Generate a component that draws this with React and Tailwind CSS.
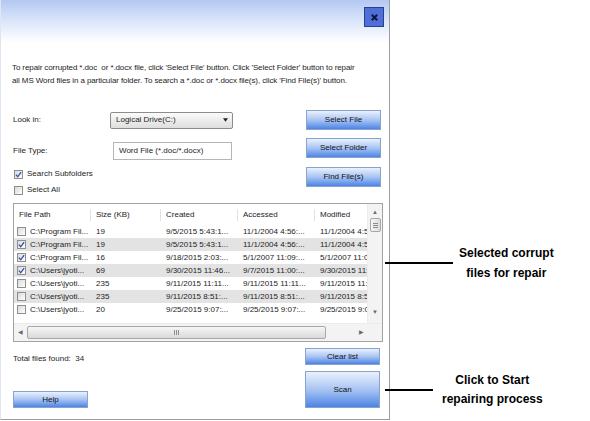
import React from 'react';

const rows = [
  { checked: false, path: 'C:\\Program Fil...', size: '19', created: '9/5/2015 5:43:1...', accessed: '11/1/2004 4:56:...', modified: '11/1/2004 4:56:...' },
  { checked: true, path: 'C:\\Program Fil...', size: '19', created: '9/5/2015 5:43:1...', accessed: '11/1/2004 4:56:...', modified: '11/1/2004 4:56:...' },
  { checked: true, path: 'C:\\Program Fil...', size: '16', created: '9/18/2015 2:03:...', accessed: '5/1/2007 11:09:...', modified: '5/1/2007 11:09:...' },
  { checked: true, path: 'C:\\Users\\jyoti...', size: '69', created: '9/30/2015 11:46...', accessed: '9/7/2015 11:00:...', modified: '9/30/2015 11:46...' },
  { checked: false, path: 'C:\\Users\\jyoti...', size: '235', created: '9/11/2015 11:11...', accessed: '9/11/2015 11:11...', modified: '9/11/2015 11:11...' },
  { checked: false, path: 'C:\\Users\\jyoti...', size: '235', created: '9/11/2015 8:51:...', accessed: '9/11/2015 8:51:...', modified: '9/11/2015 8:51:...' },
  { checked: false, path: 'C:\\Users\\jyoti...', size: '20', created: '9/25/2015 9:07:...', accessed: '9/25/2015 9:07:...', modified: '9/25/2015 9:07:...' },
];

const CheckBox = ({ checked }) => (
  <span className="flex items-center justify-center w-[9px] h-[9px] shrink-0 border border-[#8e8f8f] bg-gradient-to-br from-[#d9d9d9] to-white">
    {checked && (
      <svg viewBox="0 0 8 8" className="w-[7px] h-[7px]">
        <path d="M1 4.2 L3.1 6.6 L7 1.2" fill="none" stroke="#3551a5" strokeWidth="1.5" />
      </svg>
    )}
  </span>
);

const BlueButton = ({ children, className }) => (
  <button className={`flex items-center justify-center border border-[#8aa3cc] bg-gradient-to-b from-[#eaf1fd] via-[#a9c4f3] to-[#4c84e4] text-[#111] ${className}`}>
    {children}
  </button>
);

const Cell = ({ className, children }) => (
  <div className={`shrink-0 overflow-hidden whitespace-nowrap pl-[5px] ${className}`}>{children}</div>
);

const FileTable = () => (
  <div className="ml-[12px] mt-[6px] w-[370px] h-[139px] border border-[#a3a3a3] flex flex-col bg-white">
    <div className="flex h-[119px]">
      <div className="flex-1 flex flex-col overflow-hidden">
        <div className="flex h-[21px] items-center">
          <Cell className="w-[77px] pl-[4px] border-r border-[#e2e2e2]">File Path</Cell>
          <Cell className="w-[70px] border-r border-[#e2e2e2]">Size (KB)</Cell>
          <Cell className="w-[77px] border-r border-[#e2e2e2]">Created</Cell>
          <Cell className="w-[77px] border-r border-[#e2e2e2]">Accessed</Cell>
          <Cell className="w-[52px]">Modified</Cell>
        </div>
        <div className="h-[98px] overflow-hidden">
          {rows.map((r, i) => (
            <div key={i} className={`flex h-[13px] items-center ${i % 2 === 1 ? 'bg-[#e3e3e3]' : 'bg-white'}`}>
              <div className="w-[77px] shrink-0 flex items-center gap-[4px] pl-[3px] overflow-hidden whitespace-nowrap">
                <CheckBox checked={r.checked} />
                <span>{r.path}</span>
              </div>
              <Cell className="w-[70px]">{r.size}</Cell>
              <Cell className="w-[77px]">{r.created}</Cell>
              <Cell className="w-[77px]">{r.accessed}</Cell>
              <Cell className="w-[52px]">{r.modified}</Cell>
            </div>
          ))}
        </div>
      </div>
      <div className="w-[15px] flex flex-col items-center bg-[#f3f3f3] border-l border-[#ececec]">
        <span className="mt-[5px] text-[6px] leading-[6px] text-[#6b6b6b]">▲</span>
        <div className="mt-[3px] w-[11px] h-[14px] border border-[#a8a8a8] rounded-[2px] bg-gradient-to-r from-[#f6f6f6] to-[#dcdcdc] flex flex-col items-center justify-center gap-[1px]">
          <span className="w-[5px] h-px bg-[#8c8c8c]" />
          <span className="w-[5px] h-px bg-[#8c8c8c]" />
          <span className="w-[5px] h-px bg-[#8c8c8c]" />
        </div>
        <span className="mt-auto mb-[8px] text-[6px] leading-[6px] text-[#6b6b6b]">▼</span>
      </div>
    </div>
    <div className="flex h-[18px] items-center bg-[#f3f3f3] border-t border-[#ececec]">
      <span className="w-[13px] text-center text-[6px] text-[#6b6b6b]">◀</span>
      <div className="w-[299px] h-[13px] border border-[#a8a8a8] rounded-[2px] bg-gradient-to-b from-[#f6f6f6] to-[#dadada] flex items-center justify-center gap-[1px]">
        <span className="w-px h-[5px] bg-[#8c8c8c]" />
        <span className="w-px h-[5px] bg-[#8c8c8c]" />
        <span className="w-px h-[5px] bg-[#8c8c8c]" />
      </div>
      <span className="ml-[33px] text-[6px] text-[#6b6b6b]">▶</span>
    </div>
  </div>
);

const Window = () => (
  <div className="w-[390px] h-[420px] shrink-0 flex flex-col border-l border-l-[#dfe5f2] border-r border-b border-[#9c9c9c] bg-white">
    <div className="h-[61px] flex justify-end pt-[7px] pr-[5px] bg-[linear-gradient(to_bottom,#b3c8f2_0%,#dbe6fa_35%,#ffffff_70%)]">
      <button className="w-[20px] h-[20px] flex items-center justify-center bg-[#4e6fd8] border border-[#2b3f8e]">
        <svg viewBox="0 0 10 10" className="w-[9px] h-[9px]">
          <path d="M2 2 L8 8 M8 2 L2 8" stroke="#0f1640" strokeWidth="2.2" />
        </svg>
      </button>
    </div>
    <p className="pl-[11px] pr-[26px] leading-[13px] tracking-[-0.1px]">
      To repair corrupted *.doc&nbsp; or *.docx file, click 'Select File' button. Click 'Select Folder' button to repair all MS Word files in a particular folder. To search a *.doc or *.docx file(s), click 'Find File(s)' button.
    </p>
    <div className="mt-[23px] flex justify-between pl-[12px] pr-[8px]">
      <div className="flex flex-col">
        <div className="flex h-[20px] items-center">
          <span className="w-[97px]">Look in:</span>
          <div className="w-[123px] h-[17px] flex items-center justify-between pl-[5px] pr-[4px] rounded-[2px] border border-[#8c8c8c] bg-gradient-to-b from-[#fbfbfb] to-[#dedede]">
            <span>Logical Drive(C:)</span>
            <svg viewBox="0 0 6 4" className="w-[5px] h-[4px]"><path d="M0 0 L6 0 L3 4 Z" fill="#222" /></svg>
          </div>
        </div>
        <div className="mt-[11px] flex h-[20px] items-center">
          <span className="w-[100px]">File Type:</span>
          <div className="w-[119px] h-[18px] flex items-center pl-[5px] border border-[#b5b5b5] bg-white">Word File (*.doc/*.docx)</div>
        </div>
        <label className="mt-[6px] flex h-[14px] items-center gap-[4px] pl-[1px]">
          <CheckBox checked />
          <span>Search Subfolders</span>
        </label>
        <label className="mt-[2px] flex h-[14px] items-center gap-[4px] pl-[1px]">
          <CheckBox checked={false} />
          <span>Select All</span>
        </label>
      </div>
      <div className="flex flex-col">
        <BlueButton className="w-[75px] h-[20px]">Select File</BlueButton>
        <BlueButton className="mt-[8px] w-[75px] h-[20px]">Select Folder</BlueButton>
        <BlueButton className="mt-[9px] w-[75px] h-[20px]">Find File(s)</BlueButton>
      </div>
    </div>
    <FileTable />
    <div className="flex justify-between pl-[12px] pr-[9px]">
      <div className="flex flex-col">
        <span className="mt-[10px] leading-[13px]">Total files found:&nbsp; 34</span>
        <BlueButton className="mt-[26px] w-[75px] h-[17px]">Help</BlueButton>
      </div>
      <div className="flex flex-col">
        <BlueButton className="mt-[6px] w-[75px] h-[17px]">Clear list</BlueButton>
        <BlueButton className="mt-[6px] w-[75px] h-[37px]">Scan</BlueButton>
      </div>
    </div>
  </div>
);

const Note = ({ lineWidth, gap, leading, children }) => (
  <div className="flex items-center -ml-[5px]">
    <span className="h-[2px] bg-black" style={{ width: lineWidth }} />
    <div className={`text-center font-bold text-[12px] ${leading}`} style={{ marginLeft: gap }}>{children}</div>
  </div>
);

export default function App() {
  return (
    <div className="flex w-[590px] h-[421px] bg-white font-['Liberation_Sans',Arial,sans-serif] text-[8px] text-[#1d1d1d]">
      <Window />
      <div className="flex flex-col text-black">
        <div className="mt-[243px]">
          <Note lineWidth={68} gap={6} leading="leading-[20px]">
            Selected corrupt<br />files for repair
          </Note>
        </div>
        <div className="mt-[88px]">
          <Note lineWidth={48} gap={9} leading="leading-[19px]">
            Click to Start<br />repairing process
          </Note>
        </div>
      </div>
    </div>
  );
}
